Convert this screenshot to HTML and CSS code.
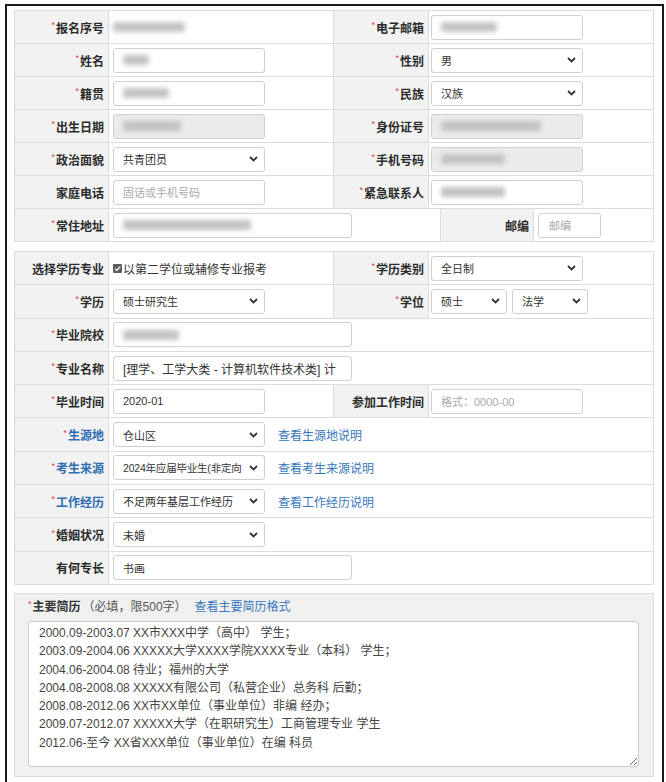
FILE: index.html
```html
<!DOCTYPE html>
<html lang="zh-CN">
<head>
<meta charset="utf-8">
<title>报名信息</title>
<link rel="stylesheet" href="styles.css">
</head>
<body>
<div class="frame">
  <div class="grid g1">
    <div class="lab"><i class="req">*</i>报名序号</div>
    <div class="val"><span class="blur bw72"></span></div>
    <div class="lab"><i class="req">*</i>电子邮箱</div>
    <div class="val r span3"><div class="box"><span class="blur bw56"></span></div></div>

    <div class="lab"><i class="req">*</i>姓名</div>
    <div class="val"><div class="box"><span class="blur bw26"></span></div></div>
    <div class="lab"><i class="req">*</i>性别</div>
    <div class="val r span3"><div class="box sel"><span class="txt">男</span><svg class="chev" width="9" height="6" viewBox="0 0 9 6"><path d="M1 1l3.5 3.5L8 1" fill="none" stroke="#333" stroke-width="1.8"/></svg></div></div>

    <div class="lab"><i class="req">*</i>籍贯</div>
    <div class="val"><div class="box"><span class="blur bw46"></span></div></div>
    <div class="lab"><i class="req">*</i>民族</div>
    <div class="val r span3"><div class="box sel"><span class="txt">汉族</span><svg class="chev" width="9" height="6" viewBox="0 0 9 6"><path d="M1 1l3.5 3.5L8 1" fill="none" stroke="#333" stroke-width="1.8"/></svg></div></div>

    <div class="lab"><i class="req">*</i>出生日期</div>
    <div class="val"><div class="box dis"><span class="blur bw58"></span></div></div>
    <div class="lab"><i class="req">*</i>身份证号</div>
    <div class="val r span3"><div class="box dis"><span class="blur bw100"></span></div></div>

    <div class="lab"><i class="req">*</i>政治面貌</div>
    <div class="val"><div class="box sel"><span class="txt">共青团员</span><svg class="chev" width="9" height="6" viewBox="0 0 9 6"><path d="M1 1l3.5 3.5L8 1" fill="none" stroke="#333" stroke-width="1.8"/></svg></div></div>
    <div class="lab"><i class="req">*</i>手机号码</div>
    <div class="val r span3"><div class="box dis"><span class="blur bw64"></span></div></div>

    <div class="lab">家庭电话</div>
    <div class="val"><div class="box"><span class="ph">固话或手机号码</span></div></div>
    <div class="lab"><i class="req">*</i>紧急联系人</div>
    <div class="val r span3"><div class="box"><span class="blur bw64"></span></div></div>

    <div class="lab"><i class="req">*</i>常住地址</div>
    <div class="val span3"><div class="box w238"><span class="blur bw128"></span></div></div>
    <div class="lab">邮编</div>
    <div class="val"><div class="box w63"><span class="ph">邮编</span></div></div>
  </div>

  <div class="grid g2">
    <div class="lab">选择学历专业</div>
    <div class="val"><svg class="chk" width="9" height="9" viewBox="0 0 9 9"><rect x="0" y="0" width="9" height="9" rx="1" fill="#5f5f5f"/><path d="M2 4.6l1.8 1.8L7.2 2.6" fill="none" stroke="#fff" stroke-width="1.3"/></svg><span class="plain">以第二学位或辅修专业报考</span></div>
    <div class="lab"><i class="req">*</i>学历类别</div>
    <div class="val r"><div class="box sel"><span class="txt">全日制</span><svg class="chev" width="9" height="6" viewBox="0 0 9 6"><path d="M1 1l3.5 3.5L8 1" fill="none" stroke="#333" stroke-width="1.8"/></svg></div></div>

    <div class="lab"><i class="req">*</i>学历</div>
    <div class="val"><div class="box sel"><span class="txt">硕士研究生</span><svg class="chev" width="9" height="6" viewBox="0 0 9 6"><path d="M1 1l3.5 3.5L8 1" fill="none" stroke="#333" stroke-width="1.8"/></svg></div></div>
    <div class="lab"><i class="req">*</i>学位</div>
    <div class="val r pair"><div class="box sel w76"><span class="txt">硕士</span><svg class="chev" width="9" height="6" viewBox="0 0 9 6"><path d="M1 1l3.5 3.5L8 1" fill="none" stroke="#333" stroke-width="1.8"/></svg></div><div class="box sel w76"><span class="txt">法学</span><svg class="chev" width="9" height="6" viewBox="0 0 9 6"><path d="M1 1l3.5 3.5L8 1" fill="none" stroke="#333" stroke-width="1.8"/></svg></div></div>

    <div class="lab"><i class="req">*</i>毕业院校</div>
    <div class="val span3"><div class="box w238"><span class="blur bw56"></span></div></div>

    <div class="lab"><i class="req">*</i>专业名称</div>
    <div class="val span3"><div class="box w238 big"><span class="txt">[理学、工学大类 - 计算机软件技术类] 计</span></div></div>

    <div class="lab"><i class="req">*</i>毕业时间</div>
    <div class="val"><div class="box"><span class="txt">2020-01</span></div></div>
    <div class="lab">参加工作时间</div>
    <div class="val r"><div class="box"><span class="ph">格式：0000-00</span></div></div>

    <div class="lab blue"><i class="req">*</i>生源地</div>
    <div class="val span3"><div class="box sel"><span class="txt">仓山区</span><svg class="chev" width="9" height="6" viewBox="0 0 9 6"><path d="M1 1l3.5 3.5L8 1" fill="none" stroke="#333" stroke-width="1.8"/></svg></div><a class="lnk">查看生源地说明</a></div>

    <div class="lab blue"><i class="req">*</i>考生来源</div>
    <div class="val span3"><div class="box sel"><span class="txt tight">2024年应届毕业生(非定向</span><svg class="chev" width="9" height="6" viewBox="0 0 9 6"><path d="M1 1l3.5 3.5L8 1" fill="none" stroke="#333" stroke-width="1.8"/></svg></div><a class="lnk">查看考生来源说明</a></div>

    <div class="lab blue"><i class="req">*</i>工作经历</div>
    <div class="val span3"><div class="box sel"><span class="txt">不足两年基层工作经历</span><svg class="chev" width="9" height="6" viewBox="0 0 9 6"><path d="M1 1l3.5 3.5L8 1" fill="none" stroke="#333" stroke-width="1.8"/></svg></div><a class="lnk">查看工作经历说明</a></div>

    <div class="lab"><i class="req">*</i>婚姻状况</div>
    <div class="val span3"><div class="box sel"><span class="txt">未婚</span><svg class="chev" width="9" height="6" viewBox="0 0 9 6"><path d="M1 1l3.5 3.5L8 1" fill="none" stroke="#333" stroke-width="1.8"/></svg></div></div>

    <div class="lab">有何专长</div>
    <div class="val span3"><div class="box w238"><span class="txt">书画</span></div></div>
  </div>

  <div class="summary">
    <div class="sum-head"><i class="req">*</i><b>主要简历</b><span class="note">（必填，限500字）</span><a class="lnk">查看主要简历格式</a></div>
    <textarea class="resume">2000.09-2003.07 XX市XXX中学（高中） 学生；
2003.09-2004.06 XXXXX大学XXXX学院XXXX专业（本科） 学生；
2004.06-2004.08 待业；福州的大学
2004.08-2008.08 XXXXX有限公司（私营企业）总务科 后勤；
2008.08-2012.06 XX市XX单位（事业单位）非编 经办；
2009.07-2012.07 XXXXX大学（在职研究生）工商管理专业 学生
2012.06-至今 XX省XXX单位（事业单位）在编 科员</textarea>
  </div>
</div>
</body>
</html>
```

FILE: styles.css
```css
* { box-sizing: border-box; }

body {
  margin: 0;
  background: #fff;
  font-family: "Liberation Sans", "Noto Sans CJK SC", sans-serif;
  color: #333;
}

.frame {
  margin: 4px 0 0 5px;
  width: 659px;
  border: 2px solid #1a1a1a;
  padding: 4px 8px 40px 7px;
}

.grid {
  display: grid;
  background: #dcdcdc;
  padding: 1px;
  gap: 1px;
}

.g1 {
  grid-template-columns: 93px 224px 94px 11px 92px 119px;
  grid-auto-rows: 32px;
}

.g2 {
  margin-top: 9px;
  grid-template-columns: 93px 224px 94px 224px;
  grid-auto-rows: 32.3px;
}

.lab {
  background: #f2f2f2;
  display: flex;
  align-items: center;
  justify-content: flex-end;
  padding-right: 4px;
  font-size: 12px;
  font-weight: bold;
  color: #2b2b2b;
  white-space: nowrap;
}

.lab.blue { color: #2f6db3; }

.req {
  font-style: normal;
  font-weight: normal;
  color: #e0393c;
  font-size: 9px;
  margin-right: 1px;
  margin-bottom: 4px;
}

.val {
  background: #fff;
  display: flex;
  align-items: center;
  padding-left: 4px;
  min-width: 0;
}

.val.r { padding-left: 2px; }
.span3 { grid-column: span 3; }
.pair { gap: 5px; }

.box {
  width: 152px;
  height: 25px;
  border: 1px solid #cfcfcf;
  border-radius: 3px;
  background: #fff;
  display: flex;
  align-items: center;
  padding: 0 9px;
  font-size: 11px;
  color: #333;
  overflow: hidden;
  white-space: nowrap;
  flex: none;
}

.box.dis { background: #ebebeb; }
.box.w238 { width: 239px; }
.box.w63 { width: 63px; padding-left: 10px; }
.box.w76 { width: 76px; }
.box.big { font-size: 12px; }

.box.sel {
  justify-content: space-between;
  padding-right: 6px;
}

.txt {
  white-space: nowrap;
}

.txt.tight {
  font-size: 10.5px;
  letter-spacing: -0.2px;
}

.chev { flex: none; margin-left: 3px; }

.ph { color: #aaa; }

.blur {
  display: inline-block;
  height: 10px;
  background: #c2c2c2;
  border-radius: 3px;
  filter: blur(2.5px);
}

.bw26 { width: 26px; }
.bw46 { width: 46px; }
.bw56 { width: 56px; }
.bw58 { width: 58px; }
.bw64 { width: 64px; }
.bw72 { width: 72px; }
.bw100 { width: 100px; }
.bw128 { width: 128px; }

.chk { flex: none; margin-right: 1px; }

.plain {
  font-size: 12px;
  color: #333;
  white-space: nowrap;
}

.lnk {
  color: #3777bb;
  font-size: 12px;
  margin-left: 13px;
  white-space: nowrap;
  cursor: pointer;
}

.summary {
  margin-top: 8px;
  background: #f0f0f0;
  border: 1px solid #dcdcdc;
  padding: 3px 14px 9px 13px;
}

.sum-head {
  display: flex;
  align-items: center;
  height: 18px;
  font-size: 12px;
  color: #333;
}

.sum-head b { font-weight: bold; }

.note { color: #555; margin-left: 2px; }

.sum-head .lnk { margin-left: 8px; }

.resume {
  display: block;
  margin-top: 6px;
  width: 611px;
  height: 146px;
  border: 1px solid #cccccc;
  border-radius: 3px;
  padding: 2px 10px;
  font-family: "Liberation Sans", "Noto Sans CJK SC", sans-serif;
  font-size: 12px;
  line-height: 18.3px;
  color: #444;
  background: #fff;
  resize: both;
}
```
